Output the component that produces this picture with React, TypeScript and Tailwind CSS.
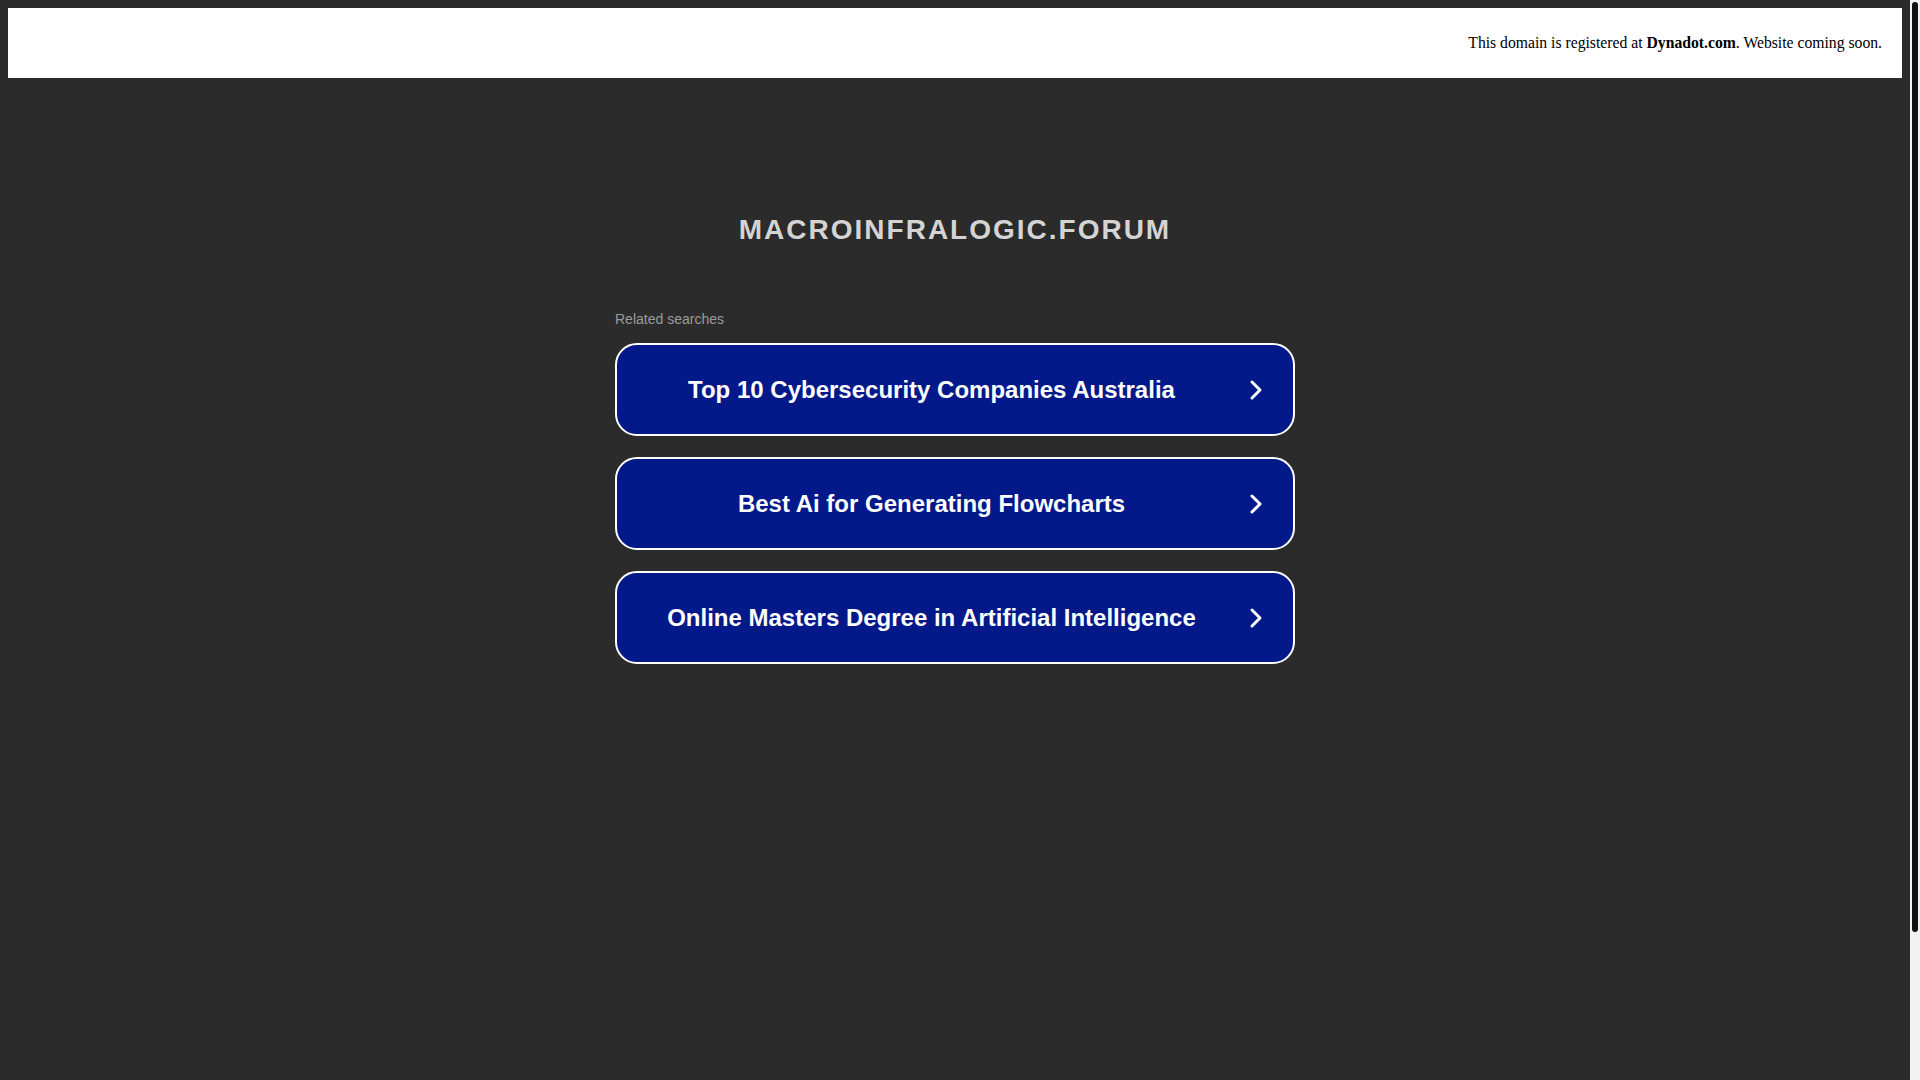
const searches = [
  "Top 10 Cybersecurity Companies Australia",
  "Best Ai for Generating Flowcharts",
  "Online Masters Degree in Artificial Intelligence",
];

function Chevron() {
  return (
    <svg width="14" height="22" viewBox="0 0 14 22" fill="none" className="shrink-0">
      <path d="M3 3 L11 11 L3 19" stroke="white" strokeWidth="3" strokeLinecap="round" strokeLinejoin="round" />
    </svg>
  );
}

export default function App() {
  return (
    <div className="flex h-screen w-full overflow-hidden bg-[#2b2b2b]">
      <main className="flex-1 p-2 font-['Liberation_Sans',Arial,sans-serif]">
        {/* top notice bar */}
        <div className="flex h-[70px] items-center justify-end bg-white pr-5 font-['Liberation_Serif','Times_New_Roman',serif] text-[15.7px] text-black">
          <p>
            This domain is registered at <b>Dynadot.com</b>. Website coming soon.
          </p>
        </div>

        <h1 className="mt-[136px] text-center text-[28px] leading-[32px] font-bold tracking-[2px] text-[#d4d4d4]">
          MACROINFRALOGIC.FORUM
        </h1>

        <div className="mx-auto mt-[63px] w-[680px]">
          <p className="text-[14px] leading-[20px] text-[#9b9b9b]">Related searches</p>
          <div className="mt-[14px] flex flex-col gap-[21px]">
            {searches.map((s) => (
              <a
                key={s}
                href="#"
                className="flex h-[93px] items-center rounded-[22px] border-2 border-white bg-[#03198a] px-[30px] text-white"
              >
                <span className="flex-1 text-center text-[24px] font-bold">{s}</span>
                <span className="ml-[33px]">
                  <Chevron />
                </span>
              </a>
            ))}
          </div>
        </div>
      </main>

      {/* scrollbar */}
      <aside className="w-[10px] bg-[#f1f1f1]">
        <div className="mt-[2px] ml-[2px] h-[930px] w-[6px] rounded-full bg-[#111111]" />
      </aside>
    </div>
  );
}
